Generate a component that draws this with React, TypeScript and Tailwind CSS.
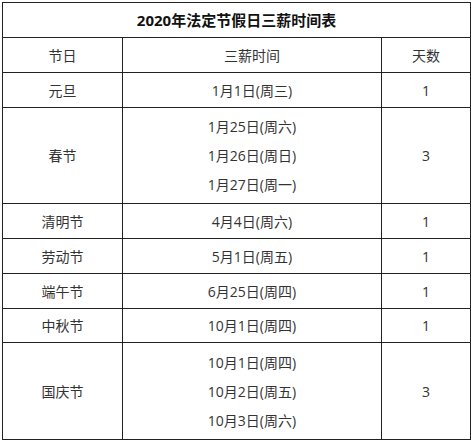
const rows: { name: string; dates: string[]; days: number; h: string }[] = [
  { name: "元旦", dates: ["1月1日(周三)"], days: 1, h: "h-[35px]" },
  { name: "春节", dates: ["1月25日(周六)", "1月26日(周日)", "1月27日(周一)"], days: 3, h: "h-[96px]" },
  { name: "清明节", dates: ["4月4日(周六)"], days: 1, h: "h-[35px]" },
  { name: "劳动节", dates: ["5月1日(周五)"], days: 1, h: "h-[35px]" },
  { name: "端午节", dates: ["6月25日(周四)"], days: 1, h: "h-[35px]" },
  { name: "中秋节", dates: ["10月1日(周四)"], days: 1, h: "h-[34px]" },
  { name: "国庆节", dates: ["10月1日(周四)", "10月2日(周五)", "10月3日(周六)"], days: 3, h: "h-[97px]" },
];

export default function App() {
  return (
    <div className="bg-white w-[471px] h-[442px] pt-[2px] pl-[2px] font-['Open_Sans','Noto_Sans_CJK_SC',sans-serif] text-[14px] text-[#333]">
      <table className="w-[468px] border-collapse table-fixed">
        <colgroup>
          <col className="w-[120px]" />
          <col className="w-[259px]" />
          <col className="w-[89px]" />
        </colgroup>
        <thead>
          <tr className="h-[35px]">
            <th colSpan={3} className="border border-[#222] font-bold text-[15px] text-[#111] text-center">
              2020年法定节假日三薪时间表
            </th>
          </tr>
          <tr className="h-[35px]">
            <th className="border border-[#222] font-normal text-center">节日</th>
            <th className="border border-[#222] font-normal text-center">三薪时间</th>
            <th className="border border-[#222] font-normal text-center">天数</th>
          </tr>
        </thead>
        <tbody>
          {rows.map((r) => (
            <tr key={r.name} className={r.h}>
              <td className="border border-[#222] text-center">{r.name}</td>
              <td className="border border-[#222] text-center">
                {r.dates.map((d) => (
                  <div key={d} className={r.dates.length > 1 ? "leading-[29px]" : ""}>
                    {d}
                  </div>
                ))}
              </td>
              <td className="border border-[#222] text-center">{r.days}</td>
            </tr>
          ))}
        </tbody>
      </table>
    </div>
  );
}
